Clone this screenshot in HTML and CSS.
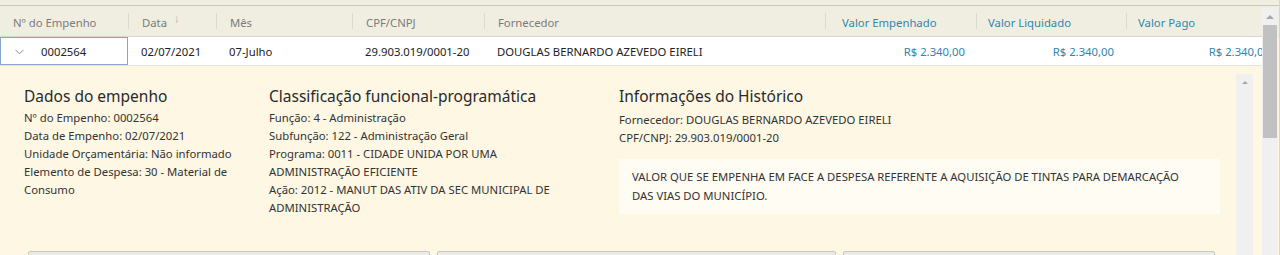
FILE: index.html
```html
<!DOCTYPE html>
<html lang="pt-BR">
<head>
  <meta charset="UTF-8">
  <title>Empenhos</title>
  <link rel="stylesheet" href="styles.css">
</head>
<body>
  <div class="grid">
    <div class="topbar"></div>

    <!-- Column headers -->
    <div class="row head">
      <div class="cell c1">Nº do Empenho</div><i class="sep"></i>
      <div class="cell c2">Data <span class="sort">&#8595;</span></div><i class="sep"></i>
      <div class="cell c3">Mês</div><i class="sep"></i>
      <div class="cell c4">CPF/CNPJ</div><i class="sep"></i>
      <div class="cell c5">Fornecedor</div><i class="sep"></i>
      <div class="cell c6 money-h">Valor Empenhado</div><i class="sep"></i>
      <div class="cell c7 money-h">Valor Liquidado</div><i class="sep"></i>
      <div class="cell c8 money-h">Valor Pago</div>
    </div>

    <div class="body">
      <div class="view">
        <!-- Selected row -->
        <div class="row data">
          <div class="cell c1 selected">
            <svg class="chev" width="9" height="6" viewBox="0 0 9 6"><path d="M0.5 0.8 L4.5 4.8 L8.5 0.8" fill="none" stroke="#8a8a8a" stroke-width="1"/></svg>
            0002564
          </div>
          <div class="cell c2">02/07/2021</div>
          <div class="cell c3">07-Julho</div>
          <div class="cell c4">29.903.019/0001-20</div>
          <div class="cell c5">DOUGLAS BERNARDO AZEVEDO EIRELI</div>
          <div class="cell c6 money">R$ 2.340,00</div>
          <div class="cell c7 money">R$ 2.340,00</div>
          <div class="cell c8 money">R$ 2.340,00</div>
        </div>

        <!-- Detail panel -->
        <div class="detail-wrap">
          <div class="detail">
            <div class="cols">
              <section>
                <h2>Dados do empenho</h2>
                <p>Nº do Empenho: 0002564</p>
                <p>Data de Empenho: 02/07/2021</p>
                <p>Unidade Orçamentária: Não informado</p>
                <p>Elemento de Despesa: 30 - Material de Consumo</p>
              </section>
              <section class="func">
                <h2>Classificação funcional-programática</h2>
                <p>Função: 4 - Administração</p>
                <p>Subfunção: 122 - Administração Geral</p>
                <p>Programa: 0011 - CIDADE UNIDA POR UMA ADMINISTRAÇÃO EFICIENTE</p>
                <p>Ação: 2012 - MANUT DAS ATIV DA SEC MUNICIPAL DE ADMINISTRAÇÃO</p>
              </section>
              <section class="hist">
                <h2>Informações do Histórico</h2>
                <p>Fornecedor: DOUGLAS BERNARDO AZEVEDO EIRELI</p>
                <p>CPF/CNPJ: 29.903.019/0001-20</p>
                <div class="note">VALOR QUE SE EMPENHA EM FACE A DESPESA REFERENTE A AQUISIÇÃO DE TINTAS PARA DEMARCAÇÃO DAS VIAS DO MUNICÍPIO.</div>
              </section>
            </div>
            <div class="boxes">
              <div class="box b1"></div>
              <div class="box b2"></div>
              <div class="box b3"></div>
            </div>
          </div>
          <div class="scroll inner"><span class="up"></span></div>
        </div>
      </div>

      <div class="scroll outer">
        <span class="up"></span>
        <div class="thumb"></div>
      </div>
    </div>
  </div>
</body>
</html>
```

FILE: styles.css
```css
/* --- Base --- */
*{box-sizing:border-box;margin:0;padding:0}
html,body{height:100%;overflow:hidden}
body{font-family:"Noto Sans",sans-serif;font-size:11.3px;color:#333;background:#fdf7e4;width:1280px}
.grid{display:flex;flex-direction:column;height:255px;border-right:1px solid #d6d6d0}

/* --- Header --- */
.topbar{height:6px;background:#f0eee0;border-bottom:1px solid #c9c8c0;flex:none}
.row{display:flex;align-items:center;width:1279px;flex:none}
.head{height:31px;background:#f0eee0;color:#7b7b7b;border-bottom:1px solid #d9d7cc;padding-top:2px}
.cell{flex:none;padding-left:13px;white-space:nowrap;overflow:hidden}
.head .cell{overflow:visible}
.sep{flex:none;width:1px;height:16px;background:#dcdacd;margin-top:-2px}
.c1{width:128px}
.c2{width:87px}
.c3{width:135px}
.c4{width:131px}
.c5{width:340px}
.c6{width:150px}
.c7{width:149px}
.c8{width:151px}
.head .c6{padding-left:16px}
.head .c7,.head .c8{padding-left:11px}
.money-h{color:#2f86b0}
.sort{color:#b0b0b0;font-size:11px;position:relative;top:-5px;margin-left:4px}

/* --- Body & rows --- */
.body{flex:1;display:flex;min-height:0}
.view{width:1262px;flex:none;overflow:hidden;display:flex;flex-direction:column}
.data{height:29px;background:#fff;color:#222;border-bottom:1px solid #e4e2da}
.data .cell{height:100%;display:flex;align-items:center;padding-top:1px}
.data .c2{width:88px}.data .c3{width:136px}.data .c4{width:132px}.data .c5{width:341px}
.data .c6{width:151px}
.selected{border:1px solid #86a8cf;padding-left:14px;gap:17px}
.money{justify-content:flex-end;padding-right:11px;color:#2f86b0}
.data .c8{width:151px;padding-right:6px}

/* --- Detail --- */
.detail-wrap{flex:1;display:flex;background:#fdf7e4;min-height:0}
.detail{width:1236px;flex:none;padding:20px 16px 0 24px;display:flex;flex-direction:column}
.cols{display:grid;grid-template-columns:221px 326px 601px;gap:24px;height:165px;flex:none}
.func{padding-right:38px}
h2{font-size:15.5px;font-weight:400;color:#2a2a2a;margin-bottom:3px;line-height:20px}
p{line-height:18px;color:#333}
.hist p{line-height:17.5px}
.hist h2{margin-bottom:5px}
.note{margin-top:13px;background:#fffcf4;padding:8px 36px 9px 13px;line-height:19px;width:601px}
.boxes{display:flex;gap:7px;padding-left:4px;flex:none}
.box{height:12px;background:#ebebea;border:1px solid #cac6b8;border-radius:2px}
.b1{width:402px}
.b2{width:399px}
.b3{width:372px}

/* --- Scrollbars --- */
.scroll{flex:none;background:#f0f0f0;display:flex;flex-direction:column;align-items:center}
.inner{width:17px;margin-top:8px;margin-right:9px}
.outer{width:16px;margin-top:-29px}
.up{width:0;height:0;border-left:4px solid transparent;border-right:4px solid transparent;border-bottom:4px solid #a8a8a8;margin-top:7px}
.inner .up{border-left-width:3.5px;border-right-width:3.5px;border-bottom-width:3.5px;margin-top:7px}
.thumb{width:14px;height:113px;background:#c1c1c1;margin-top:6px}
```
